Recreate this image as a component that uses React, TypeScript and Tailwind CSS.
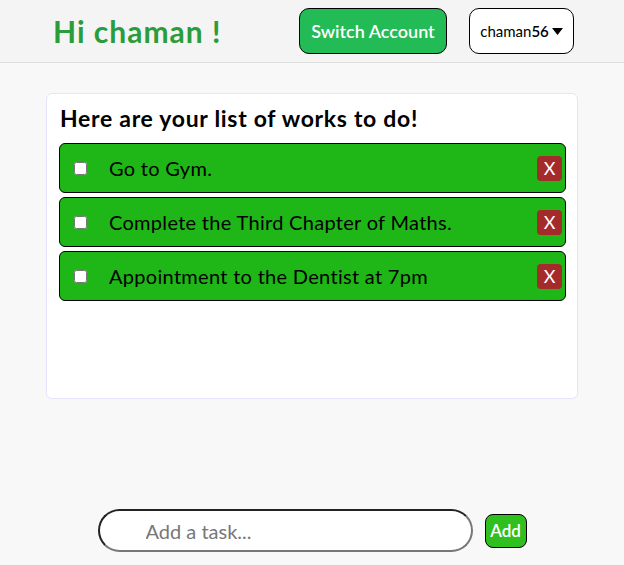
import React from 'react';

const tasks = [
    'Go to Gym.',
    'Complete the Third Chapter of Maths.',
    'Appointment to the Dentist at 7pm',
];

const TaskRow: React.FC<{ text: string }> = ({ text }) => {
    return (
        <div className="flex items-center h-[50px] bg-[#1fb617] border border-black rounded-[6px]">
            <input type="checkbox" className="ml-[14px] w-[13px] h-[13px]" />
            <span className="ml-[22px] text-[20px] tracking-[0.3px] text-black leading-none">{text}</span>
            <button className="ml-auto mr-[3px] w-[25px] h-[25px] rounded-[4px] bg-[#a52a2a] text-white text-[18px] leading-none flex items-center justify-center">
                X
            </button>
        </div>
    );
};

export default function App() {
    return (
        <div className="min-h-screen bg-[#f8f8f8] font-['Lato','Open_Sans',sans-serif]">
            <header className="h-[63px] flex items-center bg-[#f4f4f4] border-b border-[#dedede] pl-[53px] pr-[50px]">
                <h1 className="text-[30px] font-bold tracking-[1px] text-[#2a9d3a] leading-none">Hi chaman !</h1>
                <div className="ml-auto flex items-center gap-[22px]">
                    <button className="h-[46px] w-[148px] bg-[#22bb55] text-white text-[18px] font-semibold border border-black rounded-[10px]">
                        Switch Account
                    </button>
                    <button className="h-[46px] w-[105px] bg-white text-black text-[15px] border border-black rounded-[10px] flex items-center justify-center gap-[3px]">
                        <span>chaman<span className="font-semibold">56</span></span>
                        <svg width="11" height="7" viewBox="0 0 11 7">
                            <path d="M0 0h11L5.5 7z" fill="black" />
                        </svg>
                    </button>
                </div>
            </header>

            <main className="mx-[46px] mt-[30px] h-[306px] bg-white border border-[#e4e4fb] rounded-[6px] pl-[12px] pr-[11px] pt-[10px]">
                <h2 className="text-[23px] font-bold tracking-[0.7px] text-black leading-[28px] pl-[1px]">
                    Here are your list of works to do!
                </h2>
                <div className="mt-[11px] flex flex-col gap-[4px]">
                    {tasks.map((t) => (
                        <TaskRow key={t} text={t} />
                    ))}
                </div>
            </main>

            <div className="mt-[110px] flex items-center justify-center gap-[12px]">
                <input
                    type="text"
                    placeholder="Add a task..."
                    className="w-[375px] h-[43px] rounded-full bg-white border-2 border-t-[#222] border-l-[#222] border-b-[#777] border-r-[#777] pl-[46px] text-[20px] placeholder:text-[#777] outline-none"
                />
                <button className="w-[42px] h-[34px] bg-[#2fbf1f] text-white text-[17px] font-semibold border border-black rounded-[8px]">
                    Add
                </button>
            </div>
        </div>
    );
}
